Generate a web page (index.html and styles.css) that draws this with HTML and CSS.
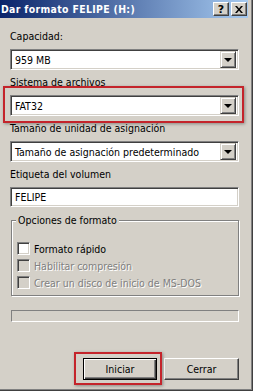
FILE: index.html
```html
<!DOCTYPE html>
<html lang="es">
<head>
  <meta charset="UTF-8" />
  <meta name="viewport" content="width=device-width, initial-scale=1" />
  <title>Dar formato FELIPE (H:)</title>
  <link rel="stylesheet" href="styles.css">
</head>
<body>
  <div class="window">
    <header class="titlebar">
      <span class="title">Dar formato FELIPE (H:)</span>
      <div class="caption-buttons">
        <button class="caption-btn help">?</button>
        <button class="caption-btn close" aria-label="Cerrar">
          <svg width="8" height="7" viewBox="0 0 8 7">
            <path d="M0 0h2l2 2.5L6 0h2L5 3.5 8 7H6L4 4.5 2 7H0l3-3.5z" fill="#000"/>
          </svg>
        </button>
      </div>
    </header>

    <main class="content">
      <div class="field">
        <label class="field-label">Capacidad:</label>
        <div class="combo">
          <span class="combo-value">959 MB</span>
          <span class="combo-arrow"></span>
        </div>
      </div>

      <div class="field">
        <label class="field-label">Sistema de archivos</label>
        <div class="marked marked-field">
          <div class="combo">
            <span class="combo-value">FAT32</span>
            <span class="combo-arrow"></span>
          </div>
        </div>
      </div>

      <div class="field">
        <label class="field-label">Tamaño de unidad de asignación</label>
        <div class="combo">
          <span class="combo-value">Tamaño de asignación predeterminado</span>
          <span class="combo-arrow"></span>
        </div>
      </div>

      <div class="field">
        <label class="field-label">Etiqueta del volumen</label>
        <div class="textbox">FELIPE</div>
      </div>

      <fieldset class="options">
        <legend>Opciones de formato</legend>
        <div class="check"><span class="box"></span>Formato rápido</div>
        <div class="check disabled"><span class="box"></span>Habilitar compresión</div>
        <div class="check disabled"><span class="box"></span>Crear un disco de inicio de MS-DOS</div>
      </fieldset>

      <div class="progress"></div>

      <div class="actions">
        <div class="marked marked-button">
          <button class="btn default">Iniciar</button>
        </div>
        <button class="btn">Cerrar</button>
      </div>
    </main>
  </div>
</body>
</html>
```

FILE: styles.css
```css
/* Classic dialog look */
html, body {
  margin: 0;
  padding: 0;
}
body {
  width: 253px;
  height: 391px;
  background: #d4d0c8;
  font-family: "DejaVu Sans Condensed", "DejaVu Sans", sans-serif;
  font-stretch: condensed;
  font-size: 10.5px;
  color: #000;
  overflow: hidden;
}
.window {
  box-sizing: border-box;
  width: 253px;
  height: 391px;
  padding-right: 4px;
  border-right: 1px solid #404040;
  border-bottom: 1px solid #404040;
  box-shadow: inset -1px -1px 0 #808080;
  background: #d4d0c8;
}

/* Title bar */
.titlebar {
  height: 18px;
  display: flex;
  align-items: center;
  justify-content: space-between;
  background: linear-gradient(to right, #0a246a, #a6caf0);
  padding-right: 1px;
}
.title {
  color: #fff;
  font-weight: bold;
  font-size: 10.4px;
  letter-spacing: 0.35px;
  padding-left: 1px;
  white-space: nowrap;
}
.caption-buttons {
  display: flex;
  gap: 2px;
}
.caption-btn {
  width: 16px;
  height: 14px;
  padding: 0;
  margin: 0;
  display: flex;
  align-items: center;
  justify-content: center;
  background: #d4d0c8;
  border: 1px solid;
  border-color: #fff #404040 #404040 #fff;
  box-shadow: inset -1px -1px 0 #808080;
  font-family: "DejaVu Sans", sans-serif;
  font-weight: bold;
  font-size: 11px;
  line-height: 1;
  color: #000;
}

/* Form area */
.content {
  padding: 12px 9px 0 10px;
}
.field {
  margin-bottom: 6px;
}
.field-label {
  display: block;
  line-height: 13px;
  margin-bottom: 6px;
}
.combo, .textbox {
  box-sizing: border-box;
  height: 21px;
  display: flex;
  align-items: center;
  background: #fff;
  border: 1px solid;
  border-color: #808080 #fff #fff #808080;
  box-shadow: inset 1px 1px 0 #404040, inset -1px -1px 0 #d4d0c8;
  padding: 2px 2px 2px 4px;
  white-space: nowrap;
}
.textbox {
  height: 20px;
}
.combo-value {
  flex: 1;
}
.combo-arrow {
  box-sizing: border-box;
  width: 16px;
  height: 17px;
  display: flex;
  align-items: center;
  justify-content: center;
  background: #d4d0c8;
  border: 1px solid;
  border-color: #d4d0c8 #404040 #404040 #d4d0c8;
  box-shadow: inset 1px 1px 0 #fff, inset -1px -1px 0 #808080;
}
.combo-arrow::after {
  content: "";
  border-left: 4px solid transparent;
  border-right: 4px solid transparent;
  border-top: 4px solid #000;
  margin-top: 1px;
}

/* Red annotation frames laid over the screenshot */
.marked {
  position: relative;
}
.marked::before {
  content: "";
  position: absolute;
  border: 2px solid #c4242b;
  box-shadow: 1px 1px 3px rgba(0, 0, 0, 0.35);
  pointer-events: none;
}
.marked-field::before {
  left: -7px;
  right: -5px;
  top: -9px;
  bottom: -7px;
}
.marked-button::before {
  left: -9px;
  right: -5px;
  top: -6px;
  bottom: -5px;
}

/* Group box */
.options {
  margin: 7px 0 0 1px;
  padding: 13px 0 4px 5px;
  border: 1px solid #808080;
  box-shadow: 1px 1px 0 #fff, inset 1px 1px 0 #fff;
}
.options legend {
  padding: 0 2px;
  margin-left: -1px;
  line-height: 13px;
  background: #d4d0c8;
}
.check {
  display: flex;
  align-items: center;
  gap: 4px;
  height: 17px;
}
.box {
  box-sizing: border-box;
  width: 13px;
  height: 13px;
  background: #fff;
  border: 1px solid;
  border-color: #808080 #fff #fff #808080;
  box-shadow: inset 1px 1px 0 #404040, inset -1px -1px 0 #d4d0c8;
}
.disabled {
  color: #808080;
  text-shadow: 1px 1px 0 #fff;
}
.disabled .box {
  background: #d4d0c8;
}

/* Progress bar */
.progress {
  margin: 14px 0 0 1px;
  height: 12px;
  border: 1px solid;
  border-color: #808080 #fff #fff #808080;
  box-sizing: border-box;
}

/* Buttons */
.actions {
  display: flex;
  justify-content: flex-end;
  gap: 7px;
  margin-top: 36px;
}
.btn {
  box-sizing: border-box;
  width: 75px;
  height: 22px;
  margin: 0;
  padding: 0;
  background: #d4d0c8;
  border: 1px solid;
  border-color: #fff #404040 #404040 #fff;
  box-shadow: inset -1px -1px 0 #808080;
  font-family: inherit;
  font-stretch: condensed;
  font-size: 10.5px;
  color: #000;
  display: block;
}
.btn.default {
  width: 74px;
  border-color: #000;
  box-shadow: inset 1px 1px 0 #fff, inset -1px -1px 0 #404040, inset -2px -2px 0 #808080;
}
```
